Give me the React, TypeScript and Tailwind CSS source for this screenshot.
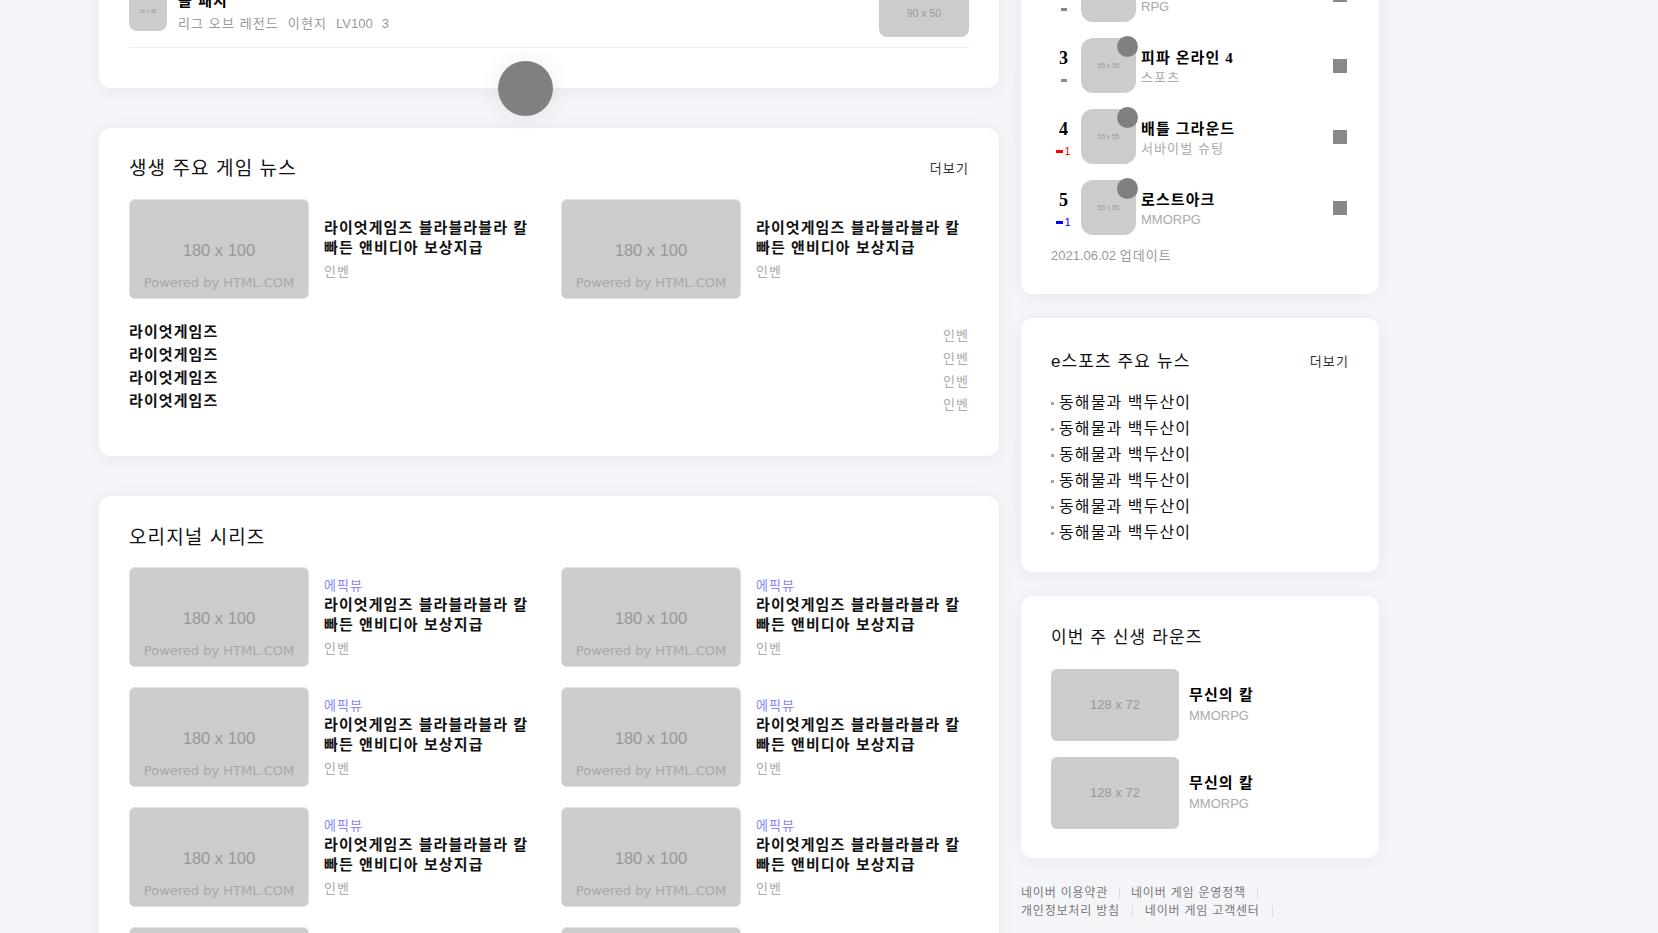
import React from "react";

const ranks = [
  { rank: 1, name: "리니지M", genre: "MMORPG", change: "same" },
  { rank: 2, name: "오딘: 발할라 라이징", genre: "RPG", change: "same" },
  { rank: 3, name: "피파 온라인 4", genre: "스포츠", change: "same" },
  { rank: 4, name: "배틀 그라운드", genre: "서바이벌 슈팅", change: "up" },
  { rank: 5, name: "로스트아크", genre: "MMORPG", change: "down" },
];

const card = "rounded-[12px] bg-white shadow-[0_2px_18px_rgba(20,30,60,0.05)]";

function Placeholder180() {
  return (
    <div className="flex h-[100px] w-[180px] shrink-0 flex-col items-center rounded-[6px] border border-[#e0e0e0] bg-[#cccccc] tracking-normal">
      <span className="mt-[38px] text-[16.5px] leading-[24px] text-[#999999]">180 x 100</span>
      <span className="mt-[13px] font-['DejaVu_Sans',sans-serif] text-[13px] leading-[16px] text-[#a8a8a8]">
        Powered by HTML.COM
      </span>
    </div>
  );
}

function NewsItem({ tag }: { tag?: string }) {
  return (
    <div className="flex items-center gap-[15px]">
      <Placeholder180 />
      <div className="flex flex-col">
        {tag && <span className="text-[13px] leading-[18px] text-[#8585f5]">{tag}</span>}
        <p className="text-[15px] font-bold leading-[20px] text-[#111111]">
          라이엇게임즈 블라블라블라 칼 빠든 앤비디아 보상지급
        </p>
        <span className="mt-[5px] text-[13px] leading-[18px] text-[#aaaaaa]">인벤</span>
      </div>
    </div>
  );
}

function Change({ type }: { type: string }) {
  if (type === "up") {
    return (
      <div className="flex h-[14px] items-center">
        <span className="h-[3px] w-[7px] bg-[#ff0000]" />
        <span className="ml-[1px] text-[11px] leading-[14px] tracking-normal text-[#ff0000]">1</span>
      </div>
    );
  }
  if (type === "down") {
    return (
      <div className="flex h-[14px] items-center">
        <span className="h-[3px] w-[7px] bg-[#0000ff]" />
        <span className="ml-[1px] text-[11px] leading-[14px] tracking-normal text-[#0000ff]">1</span>
      </div>
    );
  }
  return (
    <div className="flex h-[14px] items-center">
      <span className="h-[3px] w-[6px] bg-[#888888]" />
    </div>
  );
}

function RankRow({ item }: { item: (typeof ranks)[number] }) {
  const latinGenre = /^[A-Z]+$/.test(item.genre);
  return (
    <div className="flex h-[55px] items-start">
      <div className="flex w-[25px] flex-col items-center pt-[10px]">
        <span className="font-['Liberation_Serif',serif] text-[18px] font-bold leading-[20px] tracking-normal text-black">
          {item.rank}
        </span>
        <div className="mt-[5px]">
          <Change type={item.change} />
        </div>
      </div>
      <div className="relative ml-[5px] flex h-[55px] w-[55px] shrink-0 items-center justify-center rounded-[12px] bg-[#cccccc] text-[6.5px] tracking-normal text-[#999999]">
        55 x 55
        <span className="absolute -right-[2px] -top-[2px] h-[21px] w-[21px] rounded-full bg-[#808080]" />
      </div>
      <div className="ml-[5px] mt-[11px] flex flex-col">
        <span className="font-['Liberation_Serif','Noto_Sans_CJK_KR',serif] text-[15px] font-bold leading-[19px] text-black">
          {item.name}
        </span>
        <span
          className={
            latinGenre
              ? "text-[13px] leading-[19px] tracking-normal text-[#aaaaaa]"
              : "text-[13px] leading-[19px] text-[#aaaaaa]"
          }
        >
          {item.genre}
        </span>
      </div>
      <span className="ml-auto mr-[2px] h-[14px] w-[14px] self-center bg-[#888888]" />
    </div>
  );
}

function Lounge() {
  return (
    <div className="flex items-center">
      <div className="flex h-[72px] w-[128px] shrink-0 items-center justify-center rounded-[6px] bg-[#cccccc] text-[13px] tracking-normal text-[#999999]">
        128 x 72
      </div>
      <div className="ml-[10px] flex flex-col">
        <span className="text-[15px] font-bold leading-[20px] text-black">무신의 칼</span>
        <span className="mt-[2px] text-[13px] leading-[18px] tracking-normal text-[#aaaaaa]">MMORPG</span>
      </div>
    </div>
  );
}

export default function App() {
  return (
    <div className="h-screen overflow-hidden bg-[#f4f5f9] font-['Liberation_Sans','Noto_Sans_CJK_KR',sans-serif] tracking-[1.1px]">
      <div className="flex items-start gap-[22px] pl-[99px]">
        {/* left column */}
        <div className="mt-[-43px] flex w-[900px] shrink-0 flex-col gap-[40px]">
          <div className={`relative ${card} px-[30px] pt-[30px] pb-[40px]`}>
            <div className="flex items-center border-b border-[#efefef] pb-[10px]">
              <div className="flex h-[38px] w-[38px] items-center justify-center rounded-[8px] bg-[#cccccc] text-[5px] tracking-normal text-[#999999]">
                38 x 38
              </div>
              <div className="ml-[11px] flex flex-col">
                <span className="text-[15px] font-bold leading-[20px] text-black">올 패치</span>
                <div className="mt-[4px] flex gap-[9px] text-[13px] leading-[18px] text-[#999999]">
                  <span>리그 오브 레전드</span>
                  <span>이현지</span>
                  <span className="tracking-normal">LV100</span>
                  <span className="tracking-normal">3</span>
                </div>
              </div>
              <div className="ml-auto flex h-[50px] w-[90px] items-center justify-center rounded-[8px] bg-[#cccccc] pt-[4px] text-[10.5px] tracking-normal text-[#999999]">
                90 x 50
              </div>
            </div>
            <span className="absolute left-[399px] -bottom-[28px] h-[55px] w-[55px] rounded-full bg-[#808080] shadow-[0_0_22px_rgba(0,0,0,0.08)]" />
          </div>

          <div className={`${card} px-[30px] pt-[29px] pb-[44px]`}>
            <div className="flex items-center justify-between">
              <h2 className="text-[19px] leading-[24px] text-[#111111]">생생 주요 게임 뉴스</h2>
              <span className="text-[13px] text-[#333333]">더보기</span>
            </div>
            <div className="mt-[18px] grid grid-cols-2 gap-x-[24px]">
              <NewsItem />
              <NewsItem />
            </div>
            <ul className="mt-[21px] flex flex-col">
              {[0, 1, 2, 3].map((i) => (
                <li key={i} className="flex justify-between">
                  <span className="text-[15px] font-bold leading-[23px] text-[#111111]">라이엇게임즈</span>
                  <span className="translate-y-[4px] text-[13px] leading-[23px] text-[#aaaaaa]">인벤</span>
                </li>
              ))}
            </ul>
          </div>

          <div className={`${card} px-[30px] pt-[30px] pb-[40px]`}>
            <h2 className="text-[19px] leading-[24px] text-[#111111]">오리지널 시리즈</h2>
            <div className="mt-[17px] grid grid-cols-2 gap-x-[24px] gap-y-[20px]">
              {[0, 1, 2, 3, 4, 5, 6, 7].map((i) => (
                <NewsItem key={i} tag="에픽뷰" />
              ))}
            </div>
          </div>
        </div>

        {/* right column */}
        <div className="mt-[-134px] flex w-[358px] shrink-0 flex-col gap-[24px]">
          <div className={`${card} px-[30px] pt-[30px] pb-[28px]`}>
            <div className="flex flex-col gap-[16px]">
              {ranks.map((r) => (
                <RankRow key={r.rank} item={r} />
              ))}
            </div>
            <p className="mt-[11px] text-[13px] leading-[20px] text-[#999999]">
              <span className="tracking-normal">2021.06.02 </span>업데이트
            </p>
          </div>

          <div className={`${card} px-[30px] pt-[32px] pb-[26px]`}>
            <div className="flex items-center justify-between">
              <h2 className="text-[17px] leading-[24px] text-[#111111]">e스포츠 주요 뉴스</h2>
              <span className="text-[13px] text-[#333333]">더보기</span>
            </div>
            <ul className="mt-[16px] flex flex-col">
              {[0, 1, 2, 3, 4, 5].map((i) => (
                <li key={i} className="flex items-center gap-[5px] text-[16px] leading-[26px] text-[#111111]">
                  <span className="h-[3px] w-[3px] bg-[#a0a4b0]" />
                  동해물과 백두산이
                </li>
              ))}
            </ul>
          </div>

          <div className={`${card} px-[30px] pt-[30px] pb-[29px]`}>
            <h2 className="text-[17px] leading-[24px] text-[#111111]">이번 주 신생 라운즈</h2>
            <div className="mt-[19px] flex flex-col gap-[16px]">
              <Lounge />
              <Lounge />
            </div>
          </div>

          <div className="mt-[2px] text-[12px] leading-[18px] tracking-[0.8px] text-[#777777]">
            <div className="flex items-center">
              <span>네이버 이용약관</span>
              <span className="mx-[11px] h-[11px] w-px bg-[#dddddd]" />
              <span>네이버 게임 운영정책</span>
              <span className="mx-[11px] h-[11px] w-px bg-[#dddddd]" />
            </div>
            <div className="flex items-center">
              <span>개인정보처리 방침</span>
              <span className="mx-[12px] h-[11px] w-px bg-[#dddddd]" />
              <span>네이버 게임 고객센터</span>
              <span className="mx-[12px] h-[11px] w-px bg-[#dddddd]" />
            </div>
          </div>
        </div>
      </div>
    </div>
  );
}
